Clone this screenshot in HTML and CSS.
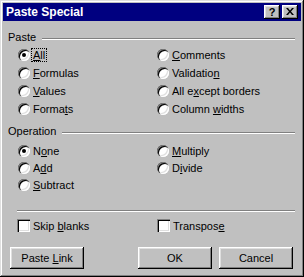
FILE: index.html
```html
<!DOCTYPE html>
<html lang="en">
<head>
<meta charset="UTF-8">
<title>Paste Special</title>
<link rel="stylesheet" href="styles.css">
</head>
<body>

<div class="dialog">

  <div class="titlebar">
    <span class="title">Paste Special</span>
    <div class="caption-btns">
      <span class="cap-btn help">?</span>
      <span class="cap-btn close">
        <svg width="8" height="7" viewBox="0 0 8 7">
          <path d="M0 0h2l2 2.5 2-2.5h2l-3 3.5 3 3.5h-2l-2-2.5-2 2.5h-2l3-3.5z" fill="#000"/>
        </svg>
      </span>
    </div>
  </div>

  <div class="content">

    <div class="group-head"><span>Paste</span><i class="etch"></i></div>
    <div class="options paste">
      <div class="opt"><span class="radio on"></span><span class="focus"><u>A</u>ll</span></div>
      <div class="opt"><span class="radio"></span><span><u>C</u>omments</span></div>
      <div class="opt"><span class="radio"></span><span><u>F</u>ormulas</span></div>
      <div class="opt"><span class="radio"></span><span>Validatio<u>n</u></span></div>
      <div class="opt"><span class="radio"></span><span><u>V</u>alues</span></div>
      <div class="opt"><span class="radio"></span><span>All e<u>x</u>cept borders</span></div>
      <div class="opt"><span class="radio"></span><span>Forma<u>t</u>s</span></div>
      <div class="opt"><span class="radio"></span><span>Column <u>w</u>idths</span></div>
    </div>

    <div class="group-head second"><span>Operation</span><i class="etch"></i></div>
    <div class="options operation">
      <div class="opt"><span class="radio on"></span><span>N<u>o</u>ne</span></div>
      <div class="opt"><span class="radio"></span><span><u>M</u>ultiply</span></div>
      <div class="opt"><span class="radio"></span><span>A<u>d</u>d</span></div>
      <div class="opt"><span class="radio"></span><span>D<u>i</u>vide</span></div>
      <div class="opt"><span class="radio"></span><span><u>S</u>ubtract</span></div>
    </div>

    <div class="separator"></div>

    <div class="checks">
      <div class="opt"><span class="checkbox"></span><span>Skip <u>b</u>lanks</span></div>
      <div class="opt"><span class="checkbox"></span><span>Transpos<u>e</u></span></div>
    </div>

    <div class="buttons">
      <span class="btn"><span>Paste <u>L</u>ink</span></span>
      <span class="btn ok"><span>OK</span></span>
      <span class="btn cancel"><span>Cancel</span></span>
    </div>

  </div>
</div>

</body>
</html>
```

FILE: styles.css
```css
body {
  margin: 0;
  background-color: #c0c0c0;
  font-family: "Liberation Sans", Arial, sans-serif;
  font-size: 11px;
  color: #000;
}

u {
  text-decoration: underline;
  text-underline-offset: 1px;
}

.dialog {
  width: 304px;
  height: 277px;
  box-sizing: border-box;
  padding: 3px;
  background-color: #c0c0c0;
  box-shadow: inset -1px -1px #000, inset 1px 1px #dfdfdf,
              inset -2px -2px #808080, inset 2px 2px #fff;
}

/* caption */
.titlebar {
  height: 18px;
  background-color: #000080;
  color: #fff;
  display: flex;
  align-items: center;
  justify-content: space-between;
  padding: 0 3px;
}
.title {
  font-weight: bold;
  font-size: 12px;
}
.caption-btns {
  display: flex;
  gap: 2px;
}
.cap-btn {
  width: 16px;
  height: 14px;
  box-sizing: border-box;
  background-color: #c0c0c0;
  box-shadow: inset -1px -1px #000, inset 1px 1px #fff,
              inset -2px -2px #808080, inset 2px 2px #dfdfdf;
  display: flex;
  align-items: center;
  justify-content: center;
  color: #000;
  font-weight: bold;
  font-size: 11px;
  line-height: 1;
}
.cap-btn svg {
  display: block;
  margin-top: -1px;
}

/* body */
.content {
  padding: 10px 6px 0 5px;
}

.group-head {
  display: flex;
  height: 13px;
  line-height: 13px;
  gap: 6px;
}
.group-head.second {
  margin-top: 7px;
}
.etch {
  flex: 1;
  margin-top: 7px;
  height: 0;
  border-top: 1px solid #808080;
  border-bottom: 1px solid #fff;
}

.options {
  display: grid;
  grid-template-columns: 139px auto;
  margin-left: 10px;
}
.options.paste {
  margin-top: 2px;
  grid-auto-rows: 18px;
}
.options.operation {
  margin-top: 4px;
  grid-auto-rows: 17px;
}

.opt {
  display: flex;
  align-items: center;
  gap: 3px;
  white-space: nowrap;
}

.radio {
  position: relative;
  width: 12px;
  height: 12px;
  flex: none;
  border-radius: 50%;
  background-color: #fff;
  box-shadow: inset 1px 1px #808080, inset 2px 2px #000,
              inset -1px -1px #fff, inset -2px -2px #dfdfdf;
}
.radio.on::after {
  content: "";
  position: absolute;
  left: 4px;
  top: 4px;
  width: 4px;
  height: 4px;
  border-radius: 50%;
  background-color: #000;
}

.focus {
  outline: 1px dotted #000;
  padding: 0 1px;
  margin-left: -1px;
  line-height: 12px;
}

.separator {
  margin: 17px 0 0 9px;
  border-top: 1px solid #808080;
  border-bottom: 1px solid #fff;
}

.checks {
  display: grid;
  grid-template-columns: 140px auto;
  grid-auto-rows: 13px;
  margin: 7px 0 0 9px;
}
.checkbox {
  width: 13px;
  height: 13px;
  flex: none;
  background-color: #fff;
  box-shadow: inset 1px 1px #808080, inset 2px 2px #000,
              inset -1px -1px #fff, inset -2px -2px #dfdfdf;
}

.buttons {
  display: flex;
  margin: 15px 0 0 2px;
}
.btn {
  width: 74px;
  height: 22px;
  box-sizing: border-box;
  display: flex;
  align-items: center;
  justify-content: center;
  white-space: nowrap;
  background-color: #c0c0c0;
  box-shadow: inset -1px -1px #000, inset 1px 1px #fff,
              inset -2px -2px #808080, inset 2px 2px #dfdfdf;
}
.btn.ok {
  margin-left: 54px;
}
.btn.cancel {
  margin-left: 7px;
}
```
